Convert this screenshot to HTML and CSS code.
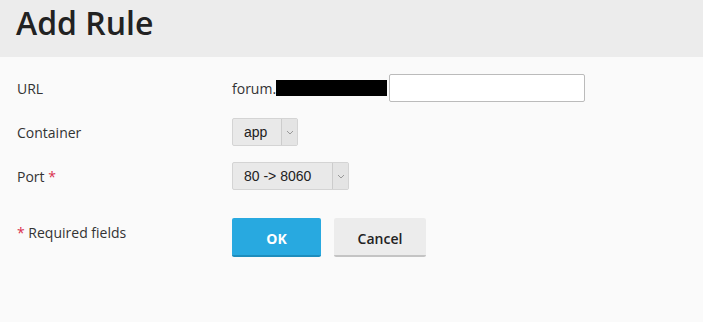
FILE: index.html
```html
<!DOCTYPE html>
<html lang="en">
<head>
  <meta charset="UTF-8">
  <title>Add Rule</title>
  <link rel="stylesheet" href="styles.css">
</head>
<body>

  <!-- Page header -->
  <div class="page-header">
    <h1>Add Rule</h1>
  </div>

  <!-- Rule form -->
  <form class="rule-form">
    <div class="form-row">
      <label class="field-label">URL</label>
      <div class="field-value">
        <span class="url-prefix">forum.</span><span class="redacted"></span>
        <input type="text" class="url-input">
      </div>
    </div>

    <div class="form-row">
      <label class="field-label">Container</label>
      <div class="field-value">
        <div class="select select-small">
          <span class="select-text">app</span>
          <span class="select-arrow">
            <svg width="8" height="5" viewBox="0 0 8 5"><path d="M1 1 L4 4 L7 1" fill="none" stroke="#999" stroke-width="1"/></svg>
          </span>
        </div>
      </div>
    </div>

    <div class="form-row">
      <label class="field-label">Port <span class="required">*</span></label>
      <div class="field-value">
        <div class="select select-wide">
          <span class="select-text">80 -&gt; 8060</span>
          <span class="select-arrow">
            <svg width="8" height="5" viewBox="0 0 8 5"><path d="M1 1 L4 4 L7 1" fill="none" stroke="#999" stroke-width="1"/></svg>
          </span>
        </div>
      </div>
    </div>

    <div class="form-row buttons-row">
      <div class="field-label hint"><span class="required">*</span> Required fields</div>
      <div class="field-value buttons">
        <button type="button" class="btn btn-primary">OK</button>
        <button type="button" class="btn">Cancel</button>
      </div>
    </div>
  </form>

</body>
</html>
```

FILE: styles.css
```css
* {
  box-sizing: border-box;
  margin: 0;
  padding: 0;
}

body {
  font-family: "Open Sans", sans-serif;
  font-size: 14px;
  color: #333;
  background-color: #fafafa;
  height: 100vh;
}

/* Header */
.page-header {
  background-color: #ececec;
  height: 57px;
  padding: 0 16px;
  display: flex;
  align-items: center;
}

.page-header h1 {
  font-size: 32px;
  font-weight: 600;
  color: #222;
  margin-top: -12px;
}

/* Form */
.rule-form {
  padding: 9px 0 0 17px;
}

.form-row {
  display: flex;
  align-items: center;
  height: 44px;
}

.field-label {
  width: 215px;
  flex-shrink: 0;
}

.required {
  color: #d9304f;
}

.field-value {
  display: flex;
  align-items: center;
}

.url-prefix {
  font-size: 14px;
  color: #333;
}

.redacted {
  display: inline-block;
  width: 111px;
  height: 16px;
  background-color: #000;
  margin-right: 2px;
}

.url-input {
  width: 196px;
  height: 28px;
  border: 1px solid #bbb;
  border-radius: 2px;
  background-color: #fff;
}

.select {
  display: flex;
  height: 28px;
  border: 1px solid #d4d4d4;
  border-radius: 2px;
  background-color: #e9e9e9;
  font-family: "Liberation Sans", Arial, sans-serif;
  font-size: 14px;
  color: #222;
}

.select-text {
  flex: 1;
  display: flex;
  align-items: center;
  padding-left: 11px;
}

.select-arrow {
  width: 16px;
  border-left: 1px solid #ccc;
  background-color: #e4e4e4;
  display: flex;
  align-items: center;
  justify-content: center;
}

.select-small {
  width: 66px;
}

.select-wide {
  width: 117px;
}

/* Buttons */
.buttons-row {
  margin-top: 20px;
  height: 40px;
  align-items: flex-start;
}

.hint {
  padding-top: 5px;
}

.buttons {
  gap: 13px;
}

.btn {
  height: 39px;
  width: 92px;
  padding-top: 3px;
  border: none;
  border-bottom: 2px solid #c4c4c4;
  border-radius: 2px;
  background-color: #ececec;
  font-family: "Open Sans", sans-serif;
  font-size: 14px;
  font-weight: 600;
  color: #222;
  cursor: pointer;
}

.btn-primary {
  width: 89px;
  background-color: #28a9e0;
  border-bottom-color: #1d8dbd;
  color: #fff;
  font-weight: 700;
}
```
